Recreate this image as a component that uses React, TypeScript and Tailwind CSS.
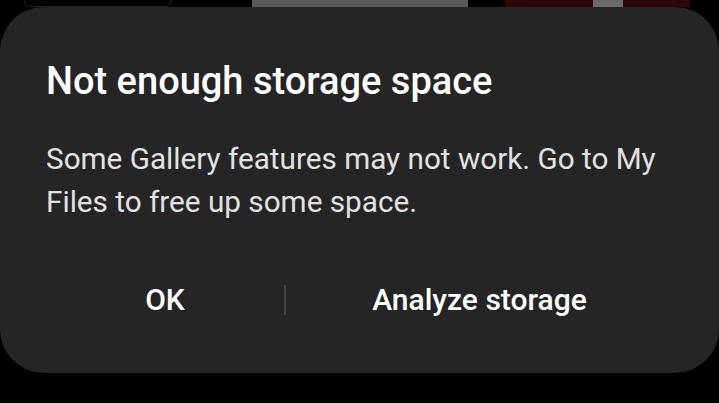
export default function App() {
  return (
    <div className="flex h-[403px] w-[719px] flex-col overflow-hidden bg-black" style={{ fontFamily: "Roboto, 'Noto Sans', sans-serif" }}>
      {/* dimmed content peeking above the dialog */}
      <div className="flex h-[7px] shrink-0 items-stretch">
        <div className="ml-[24px] w-[148px] rounded-b-full border-b border-l border-r border-[#222222]" />
        <div className="ml-[80px] w-[216px] bg-[#585858]" />
        <div className="ml-[37px] flex w-[185px] justify-center bg-[#2a0808]">
          <div className="ml-[20px] w-[30px] bg-[#6a6a6a]" />
        </div>
      </div>

      <div className="flex h-[366px] flex-col rounded-[44px] bg-[#252525] px-[46px] pt-[52px]">
        <h1 className="text-[38px] font-medium leading-[44px] text-white">Not enough storage space</h1>
        <p className="mt-[34px] text-[29.7px] leading-[43px] text-[#e2e2e2]">
          Some Gallery features may not work. Go to My Files to free up some space.
        </p>
        <div className="mt-[54px] flex items-center">
          <div className="w-[238px] text-center text-[30px] font-medium text-white">OK</div>
          <div className="h-[30px] w-[2px] bg-[#464646]" />
          <div className="flex-1 text-center text-[30px] font-medium text-white">Analyze storage</div>
        </div>
      </div>
    </div>
  );
}
